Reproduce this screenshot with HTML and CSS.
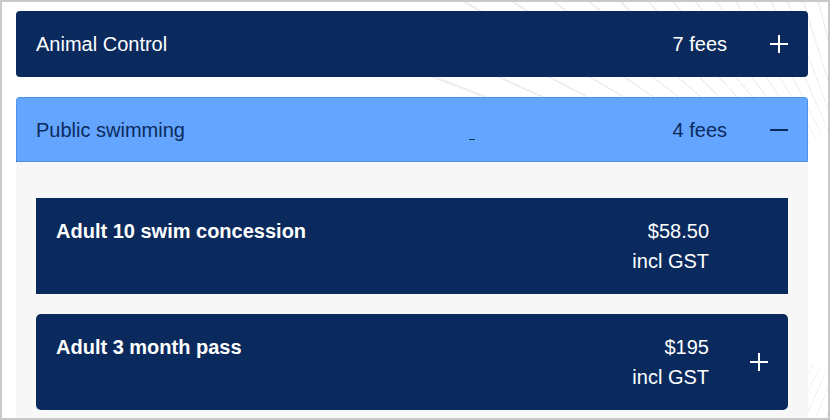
FILE: index.html
```html
<!DOCTYPE html>
<html lang="en">
<head>
<meta charset="utf-8">
<title>Fees</title>
<link rel="stylesheet" href="styles.css">
</head>
<body>
<div class="frame">
  <div class="list">
    <section class="acc">
      <div class="acc-head closed">
        <span class="acc-title">Animal Control</span>
        <span class="acc-count">7 fees</span>
        <svg class="icon" viewBox="0 0 18 18" aria-hidden="true"><path d="M9 0V18M0 9H18" stroke="#fff" stroke-width="2" fill="none"/></svg>
      </div>
    </section>
    <section class="acc">
      <div class="acc-head active">
        <span class="acc-title">Public swimming</span>
        <span class="acc-count">4 fees</span>
        <svg class="icon" viewBox="0 0 18 18" aria-hidden="true"><path d="M0 9H18" stroke="#0b2a5c" stroke-width="2" fill="none"/></svg>
        <span class="dash"></span>
      </div>
      <div class="acc-panel">
        <div class="fee square">
          <div class="fee-name">Adult 10 swim concession</div>
          <div class="fee-price"><div>$58.50</div><div>incl GST</div></div>
          <span class="fee-icon"></span>
        </div>
        <div class="fee">
          <div class="fee-name">Adult 3 month pass</div>
          <div class="fee-price"><div>$195</div><div>incl GST</div></div>
          <svg class="fee-icon" viewBox="0 0 18 18" aria-hidden="true"><path d="M9 0V18M0 9H18" stroke="#fff" stroke-width="2" fill="none"/></svg>
        </div>
      </div>
    </section>
  </div>
</div>
</body>
</html>
```

FILE: styles.css
```css
html, body {
  margin: 0;
  padding: 0;
}
body {
  font-family: "Liberation Sans", Arial, sans-serif;
  background: #fff;
}
.frame {
  position: relative;
  width: 830px;
  height: 420px;
  box-sizing: border-box;
  border: 2px solid #c9c9c9;
  overflow: hidden;
  background:
    radial-gradient(circle at 880px 250px, #fff 0 130px, transparent 131px 490px, #fff 491px),
    repeating-conic-gradient(from 0deg at 880px 250px, #efefef 0deg 0.3deg, #fff 0.3deg 3.2deg);
  padding: 9px 20px 0 14px;
}
.list {
  display: flex;
  flex-direction: column;
  gap: 20px;
}
.acc-head {
  position: relative;
  display: flex;
  align-items: center;
  box-sizing: border-box;
  padding: 0 20px;
  font-size: 20px;
  line-height: 24px;
}
.acc-head.closed {
  height: 66px;
  background: #0a2a5d;
  color: #fff;
  border-radius: 4px;
}
.acc-head.active {
  height: 65px;
  background: #63a5ff;
  color: #0b2a5c;
  border: 1px dotted #3a7fd6;
  border-radius: 4px 4px 0 0;
  padding: 0 19px;
}
.acc-title {
  flex: 1;
}
.acc-count {
  margin-right: 43px;
}
.icon {
  width: 18px;
  height: 18px;
  display: block;
}
.dash {
  position: absolute;
  left: 452px;
  top: 41px;
  width: 6px;
  height: 1px;
  background: #0b2a5c;
}
.acc-panel {
  background: #f7f7f7;
  padding: 36px 20px 36px;
  display: flex;
  flex-direction: column;
  gap: 20px;
}
.fee {
  display: flex;
  align-items: center;
  background: #0a2a5d;
  color: #fff;
  border-radius: 5px;
  padding: 18px 20px;
  font-size: 20px;
  line-height: 30px;
}
.fee.square {
  border-radius: 0;
}
.fee-name {
  flex: 1;
  font-weight: bold;
  align-self: flex-start;
}
.fee-price {
  text-align: right;
}
.fee-icon {
  display: block;
  width: 18px;
  height: 18px;
  margin-left: 41px;
}
```
